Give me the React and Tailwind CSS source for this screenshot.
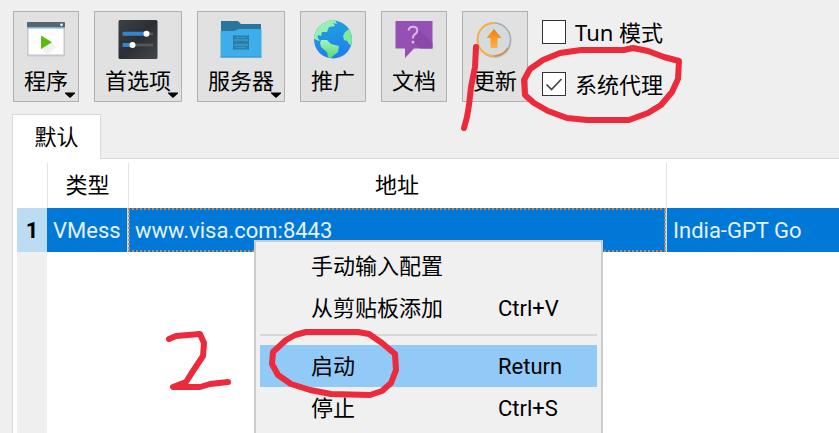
import React, { useState } from "react";

/* ============================
   ICONS
============================ */

function ProgramIcon() {
    return (
        <svg width="40" height="40" viewBox="0 0 40 40" aria-hidden="true">
            <rect x="1" y="4" width="38" height="33.5" rx="1" fill="#c3c8cc" />
            <rect x="2.5" y="9" width="35" height="26.5" fill="#fdfdfd" />
            <rect x="1" y="3" width="38" height="5.5" rx="1" fill="#566571" />
            <rect x="1.5" y="8.5" width="37" height="1.2" fill="#7fc9ee" />
            <circle cx="35.5" cy="5.8" r="1.4" fill="#eef2f4" />
            <path d="M15 30 L26 23.5 L30 28 L22 35 Z" fill="#f1f1f1" />
            <path d="M15 16.5 L26 23.2 L15 30 Z" fill="#5cba0c" />
        </svg>
    );
}

function PreferencesIcon() {
    return (
        <svg width="40" height="40" viewBox="0 0 40 40" aria-hidden="true">
            <defs>
                <linearGradient id="prefs" x1="0" y1="0" x2="1" y2="1">
                    <stop offset="0" stopColor="#3d4145" />
                    <stop offset="0.5" stopColor="#2b2e32" />
                    <stop offset="1" stopColor="#43474b" />
                </linearGradient>
            </defs>
            <rect x="0.5" y="1" width="39" height="39" rx="1.5" fill="url(#prefs)" />
            <rect x="5" y="13.5" width="30" height="2.6" fill="#55585b" />
            <rect x="5" y="24.7" width="30" height="2.6" fill="#55585b" />
            <rect x="4.5" y="12.7" width="24" height="4" rx="1" fill="#3584cf" />
            <rect x="4.5" y="24" width="10" height="4" rx="1" fill="#3584cf" />
            <circle cx="28.5" cy="14.7" r="3" fill="#fff" />
            <circle cx="14.5" cy="26" r="3" fill="#fff" />
        </svg>
    );
}

function ServerIcon() {
    return (
        <svg width="42" height="40" viewBox="0 0 42 40" aria-hidden="true">
            <path d="M1 2 H18 L21 5 H41 V20 H1 Z" fill="#2a759c" />
            <path d="M0.5 12 H14 L19 10 H41.5 V38.5 H0.5 Z" fill="#3daee9" />
            <path d="M0.5 37.5 H41.5 V38.5 H0.5 Z" fill="#3597ca" />
            <g fill="#2d7ca6">
                <rect x="13.5" y="16.5" width="15" height="4" />
                <rect x="13.5" y="21.5" width="15" height="4" />
                <rect x="13.5" y="26.5" width="15" height="4" />
            </g>
            <path d="M13.5 16 V31 M28.5 16 V31" stroke="#2d7ca6" />
            <path d="M15.5 18.5 H26 M15.5 28.5 H26" stroke="#3a98c9" />
        </svg>
    );
}

function GlobeIcon() {
    return (
        <svg width="40" height="40" viewBox="0 0 40 40" aria-hidden="true">
            <defs>
                <linearGradient id="sea" x1="0.4" y1="0" x2="0.6" y2="1">
                    <stop offset="0" stopColor="#20a3d8" />
                    <stop offset="1" stopColor="#1f7cf0" />
                </linearGradient>
                <linearGradient id="land" x1="0" y1="0" x2="0" y2="1">
                    <stop offset="0" stopColor="#a4f3bb" />
                    <stop offset="1" stopColor="#52d675" />
                </linearGradient>
                <clipPath id="globe">
                    <circle cx="20" cy="20.5" r="19" />
                </clipPath>
            </defs>
            <circle cx="20" cy="20.5" r="19" fill="url(#sea)" />
            <g clipPath="url(#globe)">
                <path
                    d="M1 14 Q6 3 17 0 L22 1 L24 5 L20 4 L22 7 L16 8 L14 13 L9 13 L8 17 L5 16 L4 20 L1 20 Z"
                    fill="#98efb2"
                />
                <path d="M0 17 L4 18 L7 22 L3 21 Z" fill="#98efb2" />
                <path
                    d="M8 21 L14 21 L18 25 L26 27 L25 33 L20 37 L18 40 L15 38 L14 33 L8 28 L7 24 Z"
                    fill="url(#land)"
                />
                <path
                    d="M36 10 L40 10 V27 L36 25 L34 22 L31 21 L30 17 L32 13 Z"
                    fill="#7beaa0"
                />
            </g>
        </svg>
    );
}

function DocsIcon() {
    return (
        <svg width="40" height="40" viewBox="0 0 40 40" aria-hidden="true">
            <path d="M1.5 2 H38.5 V29.5 H20 L11 39 V29.5 H1.5 Z" fill="#9550b3" />
            <path d="M23 9 L38.5 24 V29.5 H26 L18 22 Z" fill="#8b48aa" />
            <path
                d="M14.5 11.5 Q15 7.8 19 7.8 Q23.3 7.8 23.3 11.5 Q23.3 14 20.5 15.5 Q19 16.5 19 19.5"
                fill="none"
                stroke="#d9b9e8"
                strokeWidth="2"
            />
            <circle cx="19" cy="23" r="1.5" fill="#d9b9e8" />
        </svg>
    );
}

function UpdateIcon() {
    return (
        <svg width="40" height="40" viewBox="0 0 40 40" aria-hidden="true">
            <defs>
                <linearGradient id="arrow" x1="0" y1="0" x2="0" y2="1">
                    <stop offset="0" stopColor="#f67c0b" />
                    <stop offset="1" stopColor="#fbb44a" />
                </linearGradient>
            </defs>
            <circle cx="19.5" cy="22" r="17" fill="#c4c4c4" />
            <circle cx="19" cy="20.5" r="16.5" fill="#d5dadd" stroke="#a7a9ab" strokeWidth="1.3" />
            <path d="M19 4 A16.5 16.5 0 1 0 19 37" fill="none" stroke="#fbb03c" strokeWidth="1.8" />
            <path d="M19 37 A16.5 16.5 0 0 0 33 29" fill="none" stroke="#d98a4a" strokeWidth="1.6" />
            <path d="M19 10 L26.5 19 H22.5 V29 H15.5 V19 H11.5 Z" fill="url(#arrow)" />
        </svg>
    );
}

const tools = [
    { label: "程序", icon: ProgramIcon, menu: true },
    { label: "首选项", icon: PreferencesIcon, menu: true, wide: true },
    { label: "服务器", icon: ServerIcon, menu: true, wide: true },
    { label: "推广", icon: GlobeIcon },
    { label: "文档", icon: DocsIcon },
    { label: "更新", icon: UpdateIcon },
];

/* ============================
   TOOLBAR
============================ */

function ToolButton({ label, icon: Icon, menu, wide }) {
    return (
        <button
            type="button"
            className={`relative flex h-[91px] shrink-0 flex-col items-center border border-[#b0b0b0] bg-[#e1e1e1] pt-[7px] ${
                wide ? "w-[88px]" : "w-[66px]"
            }`}
        >
            <Icon />
            <span className="mt-[7px] leading-[32px] whitespace-nowrap">{label}</span>
            {menu && (
                <svg
                    className="absolute right-[3px] bottom-[3px]"
                    width="10"
                    height="6"
                    viewBox="0 0 10 6"
                    aria-hidden="true"
                >
                    <path d="M0 0.5 H10 V1.5 L5 6 L0 1.5 Z" fill="#000" />
                </svg>
            )}
        </button>
    );
}

function CheckOption({ label, checked, onChange }) {
    return (
        <label className="flex h-[32px] items-center gap-[9px] whitespace-nowrap">
            <span className="grid">
                <input
                    type="checkbox"
                    checked={checked}
                    onChange={(e) => onChange(e.target.checked)}
                    className="col-start-1 row-start-1 h-[24px] w-[24px] appearance-none border border-[#333] bg-white"
                />
                {checked && (
                    <svg
                        className="pointer-events-none col-start-1 row-start-1"
                        width="24"
                        height="24"
                        viewBox="0 0 24 24"
                        aria-hidden="true"
                    >
                        <path
                            d="M4.5 12.5 L9.5 17.5 L19.5 7"
                            fill="none"
                            stroke="#444"
                            strokeWidth="1.7"
                        />
                    </svg>
                )}
            </span>
            {label}
        </label>
    );
}

/* ============================
   CONTEXT MENU
============================ */

function MenuItem({ label, shortcut, active }) {
    return (
        <button
            type="button"
            role="menuitem"
            className={`grid h-[42px] w-full grid-cols-[187px_1fr] items-center pl-[51px] text-left whitespace-nowrap ${
                active ? "bg-[#91c9f7]" : ""
            }`}
        >
            <span>{label}</span>
            <span>{shortcut}</span>
        </button>
    );
}

function ContextMenu() {
    return (
        <div
            role="menu"
            className="absolute top-[240px] bottom-0 left-[254px] w-[349px] overflow-hidden border-2 border-b-0 border-[#cccccc] bg-[#f0f0f0] px-[4px] pt-[3px]"
        >
            <MenuItem label="手动输入配置" />
            <MenuItem label="从剪贴板添加" shortcut="Ctrl+V" />
            <div role="separator" className="mt-[5px] mb-[9px] h-[2px] bg-[#d7d7d7]" />
            <MenuItem label="启动" shortcut="Return" active />
            <MenuItem label="停止" shortcut="Ctrl+S" />
        </div>
    );
}

/* Hand-drawn marks on top of the window */
function Marks() {
    return (
        <svg
            className="pointer-events-none absolute top-0 left-0"
            width="839"
            height="433"
            viewBox="0 0 839 433"
            fill="none"
            stroke="#ec2a3c"
            strokeWidth="6"
            strokeLinecap="round"
            strokeLinejoin="round"
            aria-hidden="true"
        >
            <path d="M476 47 L475 67 L471 87 L469 105 L467 117 L464 128" />
            <path d="M633 48 L624 50 L581 50 L560 53 L543 60 L530 69 L524 80 L525 95 L534 103 L548 111 L567 118 L587 120 L629 120 L648 113 L661 105 L672 92 L678 79 L679 61 L664 57 L648 51 L633 48 Z" />
            <path d="M169 339 L176 336 L200 334 L204 343 L203 356 L193 371 L186 382 L173 387 L200 387 L210 384 L228 382" />
            <path d="M306 332 L358 332 L369 334 L382 343 L395 354 L396 370 L391 383 L382 391 L370 395 L331 394 L310 390 L291 384 L278 375 L272 364 L273 352 L286 340 L295 335 L306 332 Z" />
        </svg>
    );
}

export default function App() {
    const [tun, setTun] = useState(false);
    const [proxy, setProxy] = useState(true);

    return (
        <div className="relative flex h-screen flex-col overflow-hidden bg-[#efefef] font-['Roboto','Noto_Sans_CJK_SC',sans-serif] text-[22px] text-black">
            {/* Toolbar */}
            <header className="flex gap-[15px] pt-[11px] pl-[13px]">
                {tools.map((tool) => (
                    <ToolButton key={tool.label} {...tool} />
                ))}
                <div className="-ml-px flex flex-col gap-[20px] pt-[5px] font-['Noto_Sans','Noto_Sans_CJK_SC',sans-serif]">
                    <CheckOption label="Tun 模式" checked={tun} onChange={setTun} />
                    <CheckOption label="系统代理" checked={proxy} onChange={setProxy} />
                </div>
            </header>

            {/* Tabs */}
            <div role="tablist" className="mt-[12px] flex pl-[12px]">
                <button
                    type="button"
                    role="tab"
                    aria-selected="true"
                    className="h-[45px] w-[89px] border border-b-0 border-[#d9d9d9] bg-white"
                >
                    默认
                </button>
                <div className="flex-1 border-b border-[#d9d9d9]" />
            </div>

            {/* Server list */}
            <main className="ml-[12px] flex flex-1 flex-col border-l border-[#d9d9d9] bg-white pt-[4px] pl-[4px]">
                <table className="w-full table-fixed border-collapse text-left whitespace-nowrap">
                    <colgroup>
                        <col className="w-[30px]" />
                        <col className="w-[81px]" />
                        <col className="w-[538px]" />
                        <col />
                    </colgroup>
                    <thead>
                        <tr className="h-[45px]">
                            <td className="border-r border-[#e3e3e3]" />
                            <th className="border-r border-[#e3e3e3] text-center font-normal">类型</th>
                            <th className="border-r border-[#e3e3e3] text-center font-normal">地址</th>
                            <td />
                        </tr>
                    </thead>
                    <tbody>
                        <tr className="h-[44px] bg-[#0078d7] text-[#e6f1fb]">
                            <th className="bg-[#bcdcf4] text-center text-black">1</th>
                            <td className="border-r-2 border-[#d0dce6] pl-[6px]">VMess</td>
                            <td className="border-r-2 border-[#d0dce6] pl-[6px] outline-2 -outline-offset-2 outline-dotted outline-[#c08850]">
                                www.visa.com:8443
                            </td>
                            <td className="pl-[6px]">India-GPT Go</td>
                        </tr>
                    </tbody>
                </table>
                <div className="w-[30px] flex-1 bg-[#efefef]" />
            </main>

            <ContextMenu />
            <Marks />
        </div>
    );
}
